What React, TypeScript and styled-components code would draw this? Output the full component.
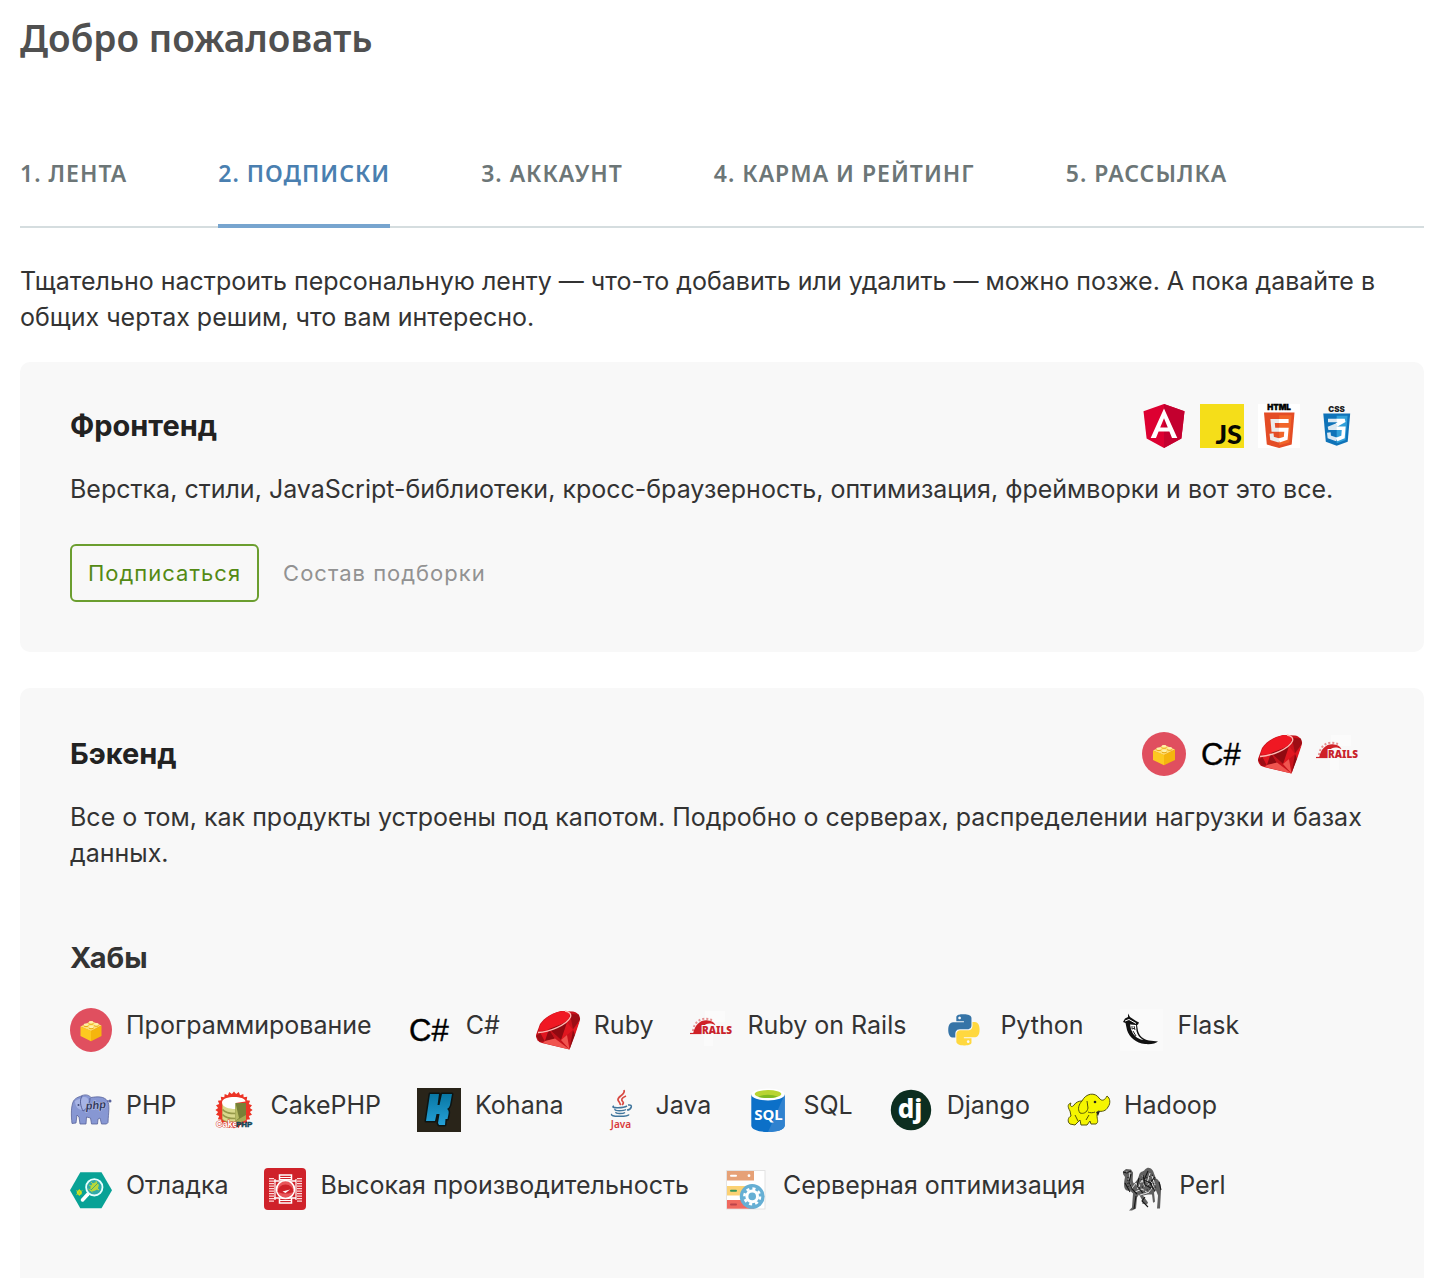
import React from 'react';
import styled, { createGlobalStyle } from 'styled-components';

const GlobalStyle = createGlobalStyle`
  *, *::before, *::after { box-sizing: border-box; }
  body {
    margin: 0;
    background: #fff;
    color: #333;
    font: 400 25px/36px Inter, "Liberation Sans", sans-serif;
  }
`;

const Page = styled.main`
  display: flex;
  flex-direction: column;
  min-height: 100vh;
  padding: 0 20px;
`;

const Title = styled.h1`
  margin: 0;
  padding-top: 10px;
  color: #505050;
  font: 600 37px/56px "Noto Sans", "Open Sans", sans-serif;
`;

const Tabs = styled.nav`
  display: flex;
  gap: 91px;
  margin-top: 74px;
  border-bottom: 2px solid #d5dddf;
`;

const Tab = styled.a<{ $active?: boolean }>`
  height: 88px;
  margin-bottom: -2px;
  padding-top: 15px;
  border-bottom: 4px solid ${(p) => (p.$active ? '#77a5cf' : 'transparent')};
  color: ${(p) => (p.$active ? '#4a7fb0' : '#6c7677')};
  font: 600 23px/36px "Noto Sans", "Open Sans", sans-serif;
  letter-spacing: 1px;
  text-decoration: none;
  text-transform: uppercase;
  white-space: nowrap;
`;

const Intro = styled.p`
  margin: 35px 0 27px;
`;

const Card = styled.section<{ $expanded?: boolean }>`
  flex: ${(p) => (p.$expanded ? '1 0 auto' : 'none')};
  padding: ${(p) => (p.$expanded ? 44 : 42)}px 50px 50px;
  border-radius: ${(p) => (p.$expanded ? '10px 10px 0 0' : '10px')};
  background: #f8f8f8;

  & + & { margin-top: 36px; }
`;

const CardHeader = styled.header`
  display: flex;
  align-items: center;
  justify-content: space-between;
  height: 44px;
`;

const CardTitle = styled.h2`
  margin: 0;
  color: #222;
  font-size: 29px;
  font-weight: 700;
  line-height: 36px;
`;

const Previews = styled.div`
  display: flex;
  gap: 14px;
  padding-right: 14px;
`;

const Description = styled.p`
  margin: 23px 0 0;
`;

const Actions = styled.div`
  display: flex;
  align-items: center;
  gap: 24px;
  margin-top: 37px;
`;

const SubscribeButton = styled.button`
  height: 58px;
  padding: 0 16px;
  border: 2px solid #6b9e2f;
  border-radius: 6px;
  background: transparent;
  color: #548a15;
  font: 400 22px/36px Inter, "Liberation Sans", sans-serif;
  letter-spacing: 1px;
  cursor: pointer;
`;

const TextButton = styled.button`
  padding: 0;
  border: 0;
  background: transparent;
  color: #929292;
  font: 400 22px/36px Inter, "Liberation Sans", sans-serif;
  letter-spacing: 1px;
  cursor: pointer;
`;

const HubsTitle = styled.h3`
  margin: 69px 0 32px;
  font-size: 29px;
  font-weight: 700;
  line-height: 36px;
`;

const HubList = styled.ul`
  display: flex;
  flex-wrap: wrap;
  gap: 36px;
  margin: 0;
  padding: 0;
  list-style: none;
`;

const HubLink = styled.a`
  display: flex;
  align-items: flex-start;
  gap: 14px;
  height: 44px;
  color: inherit;
  line-height: 34px;
  text-decoration: none;
  white-space: nowrap;
`;

const Picture = styled.svg<{ $width: number }>`
  display: block;
  flex: none;
  width: ${(p) => p.$width}px;
  height: 44px;
  overflow: visible;
`;

const seal = Array.from({ length: 48 }, (_, i) => {
  const r = i % 2 ? 16 : 18.6;
  const a = (i * Math.PI) / 24;
  return `${(21 + r * Math.cos(a)).toFixed(1)},${(22 + r * Math.sin(a)).toFixed(1)}`;
}).join(' ');

const drawings: Record<string, React.ReactNode> = {
  angular: (
    <>
      <path fill="#dd0031" d="M22 0 42.5 7.3 39.4 34.4 22 44 4.6 34.4 1.5 7.3z" />
      <path fill="#c3002f" d="M22 0 42.5 7.3 39.4 34.4 22 44z" />
      <path fill="#fff" fillRule="evenodd" d="M22 4.5 8.7 34H14l2.600-6.500h10.800L30 34h5.300zm0 9.700 3.800 9.300h-7.600z" />
    </>
  ),
  js: (
    <>
      <rect width="44" height="44" fill="#f5de19" />
      <text x="42" y="40" textAnchor="end" fontFamily="Lato, sans-serif" fontWeight="900" fontSize="27" fill="#080800">JS</text>
    </>
  ),
  html: (
    <>
      <rect width="42" height="44" fill="#fff" />
      <text x="21" y="6" textAnchor="middle" fontFamily="Inter, sans-serif" fontWeight="900" fontSize="8" fill="#000" stroke="#000" strokeWidth=".4">HTML</text>
      <path fill="#e44d26" d="M6 8.500h30.500L33.700 40.500 21.200 44 8.800 40.500z" />
      <path fill="#f16529" d="M21.200 11.200h12.400l-2.300 27.200-10.100 2.900z" />
      <path fill="none" stroke="#ebebeb" strokeWidth="4" d="M21.200 17H14.600l.8 8.700h5.800M13.500 29.500l.6 5 7.100 2" />
      <path fill="none" stroke="#fff" strokeWidth="4" d="M21 17h9.600M21 25.700h7.500l-.8 8.600-6.700 2.200" />
    </>
  ),
  css: (
    <>
      <text x="20.500" y="8" textAnchor="middle" fontFamily="Inter, sans-serif" fontWeight="900" fontSize="8" fill="#222">CSS</text>
      <path fill="#0f73b8" d="M7.300 9.500h26.900l-2.500 28.300-11 3.900-10.900-3.900z" />
      <path fill="#31a0d9" d="M20.700 11.800h10.900l-2.100 24.300-8.800 3.100z" />
      <path fill="none" stroke="#dce9f2" strokeWidth="3.600" d="M12 16.500h9M21 20.800l-8.600 3.500h8.600M12.800 28.500l.5 4.500 7.500 2.500" />
      <path fill="none" stroke="#fff" strokeWidth="3.600" d="M20.700 16.500h8l-8 4.300M20.700 24.300h7l-.7 8.700-6.300 2.500" />
    </>
  ),
  brick: (
    <>
      <circle cx="22" cy="22" r="22" fill="#e04f5f" />
      <path fill="#fddf78" d="M11 18.400 22.300 13 33 17.600 22 23.300z" />
      <path fill="#fdc920" d="M11 18.400 22 22.800v10.400L11 28z" />
      <path fill="#f5b50e" d="M22 22.800 33 17.600V28L22 33.200z" />
      <g fill="#e8a80d">
        <ellipse cx="16.800" cy="17.600" rx="2.600" ry="1.500" />
        <ellipse cx="22.300" cy="19.700" rx="2.600" ry="1.500" />
        <ellipse cx="22" cy="15.200" rx="2.600" ry="1.500" />
        <ellipse cx="27.600" cy="17.200" rx="2.600" ry="1.500" />
      </g>
      <g fill="#fff0a8">
        <ellipse cx="16.800" cy="16.800" rx="2.500" ry="1.300" />
        <ellipse cx="22.300" cy="18.900" rx="2.500" ry="1.300" />
        <ellipse cx="22" cy="14.400" rx="2.500" ry="1.300" />
        <ellipse cx="27.600" cy="16.400" rx="2.500" ry="1.300" />
      </g>
    </>
  ),
  csharp: (
    <text x="1" y="33" fontFamily="Liberation Sans, sans-serif" fontSize="31" fill="#000" stroke="#000" strokeWidth=".4">C#</text>
  ),
  ruby: (
    <>
      <path fill="#c8121b" d="M0 27 4 16C9 9 16 5 25 3l12 .5c4 .5 6 3 7 7L33.500 41.500 6 35C2 34 0 31 0 27z" />
      <path fill="#f01823" d="M3 22C3 15 13 6 24 3.500c10-1.500 12 4 7 8.500C24 19 5 25 3 22z" />
      <path fill="#9d0d14" d="M34 6 43 6.500 44 12 37 21zM0 28 4.500 25 8.500 33 4 34z" />
      <path fill="#e0161f" d="M31 14 37 22 25 32zM4.500 25 13 21 9 33zM37 22 44 12 39 27z" />
      <path fill="#8f0a11" d="M13 21 31 14 25 32zM37 22 39 27 33.500 41.500zM13 21 19 31 9 33z" />
      <path fill="#c3131b" d="M13 21 25 32 19 31z" />
      <path fill="#f0544f" d="M9 33 19 30.500 33.500 41.500 7 35zM25 32 31 27 33.500 41.500z" />
      <path fill="none" stroke="#ffb9b2" strokeWidth="1.300" d="M2 24.500C13 24 31 17 34.500 9c1-3-1-5-5.500-6" />
    </>
  ),
  rails: (
    <>
      <path fill="#fbfbfb" d="M15 3h20v11H15zM14 27h9v11h-9z" />
      <path fill="none" stroke="#e58f90" strokeWidth="2" strokeDasharray="2 2" d="M3 23C4 14 11 8 22 12" />
      <path fill="#cf2127" d="M3 26C5 16 11 11.500 18 12.500c5 .5 7 3 7.500 5-4-3-10-2.500-12 1-1.500 2.500-1.500 5-1 7.500z" />
      <path fill="none" stroke="#cf2127" strokeWidth="1.200" d="M0 25.500h12" />
      <text x="12" y="26" fontFamily="Noto Sans, sans-serif" fontWeight="900" fontSize="10" fill="#c9232b" stroke="#f8f8f8" strokeWidth="2" paintOrder="stroke">RAILS</text>
    </>
  ),
  python: (
    <g transform="translate(6.300 6.200) scale(1.300)">
      <path fill="#3674a7" d="M14.250.18l.9.2.73.26.59.3.45.32.34.34.25.34.16.33.1.3.04.26.02.2-.01.13V8.500l-.05.63-.13.55-.21.46-.26.38-.3.31-.33.25-.35.19-.35.14-.33.1-.3.07-.26.04-.21.02H8.770l-.69.05-.59.14-.5.22-.41.27-.33.32-.27.35-.2.36-.15.37-.1.35-.07.32-.04.27-.02.21v3.060H3.170l-.21-.03-.28-.07-.32-.12-.35-.18-.36-.26-.36-.36-.35-.46-.32-.59-.28-.73-.21-.88-.14-1.050-.05-1.230.06-1.220.16-1.040.24-.87.32-.71.36-.57.4-.44.42-.33.42-.24.4-.16.36-.1.32-.05.24-.01h.16l.06.01h8.160v-.83H6.180l-.01-2.750-.02-.37.05-.34.11-.31.17-.28.25-.26.31-.23.38-.2.44-.18.51-.15.58-.12.64-.1.71-.06.77-.04.84-.02 1.270.05zm-6.300 1.980l-.23.33-.08.41.08.41.23.34.33.22.41.09.41-.09.33-.22.23-.34.08-.41-.08-.41-.23-.33-.33-.22-.41-.09-.41.09z" />
      <path fill="#ffd83f" d="M21.040 6.110l.28.06.32.12.35.18.36.27.36.35.35.47.32.59.28.73.21.88.14 1.040.05 1.230-.06 1.230-.16 1.040-.24.86-.32.71-.36.57-.4.45-.42.33-.42.24-.4.16-.36.09-.32.05-.24.02-.16-.01h-8.220v.82h5.840l.01 2.760.02.36-.05.34-.11.31-.17.29-.25.25-.31.24-.38.2-.44.17-.51.15-.58.13-.64.09-.71.07-.77.04-.84.01-1.270-.04-1.070-.14-.9-.2-.73-.25-.59-.3-.45-.33-.34-.34-.25-.34-.16-.33-.1-.3-.04-.25-.02-.2.01-.13v-5.340l.05-.64.13-.54.21-.46.26-.38.3-.32.33-.24.35-.2.35-.14.33-.1.3-.06.26-.04.21-.02.13-.01h5.840l.69-.05.59-.14.5-.21.41-.28.33-.32.27-.35.2-.36.15-.36.1-.35.07-.32.04-.28.02-.21V6.070h2.090l.14.01zm-6.470 14.250l-.23.33-.08.41.08.41.23.33.33.23.41.08.41-.08.33-.23.23-.33.08-.41-.08-.41-.23-.33-.33-.23-.41-.08-.41.08z" />
    </g>
  ),
  flask: (
    <>
      <rect width="43" height="42" y="1" fill="#fafafa" />
      <path fill="#111" d="M8 5.500 10 9l6 4 3 1.500-1 2-1 .5 1 6c1.500 5 5 8.500 11 9.500l9 1c-2 2-7 3-13 2.500-9-1-16-7-18-14L5.500 15 3 14l2-3.500 3-1.500z" />
      <path fill="#fff" d="M10 16.500l6 .5.500 6c1 4 3 7 7 9-7-1-11-6-12.500-11z" />
      <path fill="none" stroke="#fff" strokeWidth="1" d="M5 13l4-1.500 7 4" />
      <path fill="none" stroke="#222" strokeWidth="1" d="M12 18v3l3-1M13 23l3 5M14 18l1 4" />
    </>
  ),
  php: (
    <>
      <path fill="#8797d3" stroke="#59639b" strokeWidth=".8" d="M2 35.500C1 27 1 18 3.500 13 6 9 10 9 12 7.500c5-1.500 7 0 9 2 6-1 13-1.500 16.500 3.500 2.500 4 1 11 .5 21.500l-1.500 1.500h-5L30 30l-2 1-.5 5h-6l-1-6-4-1-.5 7h-6L9 29l-2-2-1 8z" />
      <path fill="#a7b4e5" d="M5 13c3-2 6-2 8-4 4-.5 5 1 5.500 4-1 5-3 9-6 9C8 22 5 18 5 13z" />
      <path fill="none" stroke="#59639b" strokeWidth="1" d="M12 8c-3 5-1 11 1 15 4-2 7-7 7-13M37 13h4" />
      <circle cx="40" cy="13" r="1.500" fill="#59639b" />
      <circle cx="8.500" cy="17" r="1" fill="#414978" />
      <text x="16" y="21" transform="rotate(-5 25 20)" fontFamily="Liberation Sans, sans-serif" fontWeight="700" fontStyle="italic" fontSize="11" fill="#343b60" stroke="#c2cbed" strokeWidth="1" paintOrder="stroke">php</text>
    </>
  ),
  cake: (
    <>
      <polygon fill="#ec3426" points={seal} />
      <path fill="#a7aa54" d="M9.500 15h23.500v17c-5 4-19 4-23.500 0z" />
      <path fill="#d9d98c" d="M9.500 16c3 4 8 4 13 4v13.500c-5 .5-10 0-13-2.500z" />
      <path fill="none" stroke="#96994a" strokeWidth="1.500" d="M9.500 21.500c3 4 8 4 13 4M9.500 26.500c3 4 8 4 13 4" />
      <path fill="#fff" d="M9 14.500c0-7 23-7 23.500-1L22.500 15v6C16 21 9 19 9 14.500z" />
      <path fill="#788037" d="M22.500 15 33 15v12l-10.500 6z" />
      <path fill="#b7bb64" d="M22.500 15 26 30l-3.500 3z" />
      <text x="3" y="39" fontFamily="Liberation Sans, sans-serif" fontWeight="700" fontSize="9" fill="#fff" stroke="#d94b3d" strokeWidth="1" paintOrder="stroke">Cake</text>
      <text x="23" y="39" fontFamily="Liberation Sans, sans-serif" fontWeight="700" fontSize="8" fill="#12495b" stroke="#12495b" strokeWidth=".5">PHP</text>
    </>
  ),
  kohana: (
    <>
      <defs>
        <linearGradient id="kohana-blue" x1="0" y1="0" x2="0" y2="1">
          <stop stopColor="#0877a4" />
          <stop offset="1" stopColor="#25a0d6" />
        </linearGradient>
      </defs>
      <rect width="44" height="44" fill="#292419" />
      <path fill="url(#kohana-blue)" stroke="#0c1413" strokeWidth="3" strokeLinejoin="round" paintOrder="stroke" d="M13 6h9l-1.500 11h2L25 6h10l-2 11c-.5 2-1.500 3-3 4 1.500 1 2 2.500 1.500 5l-1 5h-2l-.5 6h-6l-1-2 1.500-9h-3L18 33H9z" />
    </>
  ),
  java: (
    <>
      <g fill="none" stroke="#d84a43" strokeWidth="1.700">
        <path d="M24 2c2 5-7 6-6 10 .5 2 3 3 2 5" />
        <path d="M26 8c-5 2-5 4-3 6 1 1 0 2-1 3" />
      </g>
      <g fill="none" stroke="#41769d" strokeWidth="1.500">
        <path d="M14 18c-5 2 9 2.500 13 0M28 17c6-1 3 5-1 5M15 21c-1 2.500 9 2 11 .5M16 24c-1 2 7 2 9 .5M12 26c-4 3 16 3 17 .500" />
      </g>
      <text x="21" y="40" textAnchor="middle" fontFamily="Noto Sans, sans-serif" fontWeight="600" fontSize="10" fill="#d8393b">Java</text>
    </>
  ),
  sql: (
    <>
      <path fill="#0c70c8" d="M4.300 6.500h33.400v31c0 8.700-33.400 8.700-33.400 0z" />
      <path fill="#3082cf" d="M37.700 6.500v31c0 4.500-8.700 6.500-16.700 6.500z" />
      <ellipse cx="21" cy="6.500" rx="16.700" ry="6" fill="#fff" />
      <ellipse cx="21" cy="6" rx="13.300" ry="4" fill="#b8d432" />
      <path fill="#7fba22" d="M11 8.700c6-2.700 14-2.700 20 0-5 1.800-15 1.800-20 0z" />
      <text x="21.500" y="32" textAnchor="middle" fontFamily="Noto Sans, sans-serif" fontWeight="700" fontSize="15" fill="#fff">SQL</text>
    </>
  ),
  django: (
    <>
      <circle cx="22" cy="22" r="20.200" fill="#0c2e20" />
      <text x="21" y="30" textAnchor="middle" fontFamily="Noto Sans, sans-serif" fontWeight="800" fontSize="26" fill="#fff">dj</text>
    </>
  ),
  hadoop: (
    <>
      <g fill="#f5f500" stroke="#55550c" strokeWidth="1" strokeLinejoin="round">
        <path d="M4 23c-3-5-2-7 1-8-2 3 1 5 3 2 2-3 5-4 8-4 4-8 13-9 17-3 3 4 6 2 8-2 3 2 4 7 1 11-2 4-6 5-10 4l-1 4c0 5 2 7-1 9h-5l-1-3-3 4h-6l-1-5-5 5-5-1c-3-2-2-7 1-8z" />
        <path d="M16 13c-3 3-5 8-2 12 3 1 7 0 8-5l-1-7" />
      </g>
      <path fill="none" stroke="#55550c" strokeWidth="1" d="M22 24c2 1 5 1 7 0M9 27l3 6M20 32l3-5" />
      <circle cx="29" cy="14" r="1.300" fill="#222" />
      <path fill="#222" d="M30 24l4-1-2 5z" />
    </>
  ),
  debug: (
    <>
      <path fill="#08a296" d="M0 22.300 10.300 4.300h21.200L42 22.300 31.500 40.300H10.300z" />
      <path stroke="#fff" strokeWidth="3.500" strokeLinecap="round" d="M12.500 32 18 26" />
      <circle cx="24.300" cy="19.300" r="8.200" fill="#30aaa7" stroke="#e7ffff" strokeWidth="1.800" />
      <ellipse cx="24.500" cy="18.800" rx="3.500" ry="5" transform="rotate(40 24.500 18.800)" fill="#b9d839" />
      <path stroke="#b9d839" strokeWidth="1" d="M19 17l10 5M21 14l8 8M26 13l2 5M18.500 21l4 3" />
      <path stroke="#12988a" strokeWidth=".7" d="M21 22l7-7" />
      <circle cx="9.300" cy="24.600" r="2.500" fill="#d9e51c" />
      <path stroke="#a9cf2f" strokeWidth="1" strokeDasharray="1 1" d="M6 22.500l7 4M6 27l7-5M9.300 21v7" />
    </>
  ),
  performance: (
    <>
      <rect width="42" height="42" rx="4" fill="#cf222a" />
      <path fill="none" stroke="#fff" strokeWidth="1.500" d="M15.500 12V7h12v5M15.500 30v5h12v-5M10 13h22M10 30h22" />
      <path stroke="#fff" strokeWidth="1" d="M16 9.500h11M16 11.500h11M16 28h11M16 32.500h11" />
      <path stroke="#ffd8d8" strokeWidth="5" strokeDasharray="1.300 1.200" d="M7.500 10v24M35.500 10v24" />
      <path fill="none" stroke="#fff" strokeWidth="1.200" d="M11 11v21M32 11v21" />
      <circle cx="21.500" cy="21.500" r="9" fill="#e8565a" stroke="#fff" strokeWidth="1.600" />
      <path fill="#cf222a" d="M13.500 24a8 7.500 0 0 1 16 0l-5 1.500h-6z" />
      <path fill="#fff" d="M18.500 23.500l7.500-2-4.500 3.500z" />
    </>
  ),
  server: (
    <>
      <rect x="1.600" y="2.600" width="38.400" height="38.400" fill="#fff" stroke="#ddd" strokeWidth=".8" />
      <path fill="#e6a177" d="M2 3h27v9.500H2z" />
      <path fill="#fbd174" d="M2 18h27v9.500H2z" />
      <path fill="#f0695f" d="M2 32h27v8.700H2z" />
      <path stroke="#fff" strokeWidth="2" strokeLinecap="round" d="M6 7.700h5" />
      <circle cx="24" cy="7.700" r="1.400" fill="#fff" />
      <path stroke="#35965b" strokeWidth="2" strokeLinecap="round" d="M6 22.700h5" />
      <path stroke="#bb444b" strokeWidth="2" strokeLinecap="round" d="M6 36.500h5" />
      <circle cx="27.200" cy="28.400" r="12.400" fill="#66afd4" />
      <circle cx="27.200" cy="28.400" r="5.300" fill="none" stroke="#fff" strokeWidth="3" />
      <circle cx="27.200" cy="28.400" r="7.800" fill="none" stroke="#fff" strokeWidth="2.600" strokeDasharray="3.060 3.060" />
    </>
  ),
  camel: (
    <>
      <path fill="#606060" d="M2 3.500 5 1l5 .5 2 3c0 5-1 9 1 11 2-2 4-4 5-8 1-5 4-3 6-6 4-4 8 0 9 4l2 5c4 2 5 6 5 12l-1 18h-3l1-13-2-5-2 2 1 9-1 1h-1l-1-8-4 0-5 1 5 7-1 2-5-1 1-2-4-7-2 3-1 11-4 2h-3l3-3 1-14-3-3C3 24 2 18 4 9L2 6z" />
      <g fill="none" stroke="#eee" strokeWidth=".9">
        <path d="M5 4l4 1-1 8 3 8M11 20l4-5 2 6 4-9 3 7M21 7l5 8 3-10M26 18l4-5 4 10M14 24l7-3 6 4 4-5M19 27l7-2M31 8l3 9" />
      </g>
      <g fill="none" stroke="#181818" strokeWidth="1.100">
        <path d="M2 4l4 1 4-2M10 6l-2 8 3 7 5 5M4 15l5 9M18 10l-2 8 6 7M22 7l2 10 6 3M27 3l-4 9 8 4M34 9l-5 6 5 8M15 28l-2 13M24 29l-3 4 6 6M38 14l2 8" />
        <path strokeDasharray="1 2" d="M17 13l15-6M19 16l16-5M18 20l17-5M20 24l15-5M7 9v12" />
      </g>
    </>
  ),
};

function Icon({ name, width = 44 }: { name: string; width?: number }) {
  return (
    <Picture $width={width} viewBox={`0 0 ${name === 'brick' ? 44 : width} 44`} preserveAspectRatio="none" aria-hidden="true">
      {drawings[name]}
    </Picture>
  );
}

const tabs = ['1. Лента', '2. Подписки', '3. Аккаунт', '4. Карма и рейтинг', '5. Рассылка'];

const hubs = [
  { icon: 'brick', label: 'Программирование', width: 42 },
  { icon: 'csharp', label: 'C#' },
  { icon: 'ruby', label: 'Ruby' },
  { icon: 'rails', label: 'Ruby on Rails' },
  { icon: 'python', label: 'Python' },
  { icon: 'flask', label: 'Flask' },
  { icon: 'php', label: 'PHP', width: 42 },
  { icon: 'cake', label: 'CakePHP' },
  { icon: 'kohana', label: 'Kohana' },
  { icon: 'java', label: 'Java', width: 42 },
  { icon: 'sql', label: 'SQL', width: 42 },
  { icon: 'django', label: 'Django' },
  { icon: 'hadoop', label: 'Hadoop' },
  { icon: 'debug', label: 'Отладка', width: 42 },
  { icon: 'performance', label: 'Высокая производительность', width: 42 },
  { icon: 'server', label: 'Серверная оптимизация' },
  { icon: 'camel', label: 'Perl' },
];

function CardHead({ title, icons }: { title: string; icons: string[] }) {
  return (
    <CardHeader>
      <CardTitle>{title}</CardTitle>
      <Previews>
        {icons.map((name) => <Icon key={name} name={name} />)}
      </Previews>
    </CardHeader>
  );
}

export default function App() {
  return (
    <>
      <GlobalStyle />
      <Page>
        <Title>Добро пожаловать</Title>
        <Tabs>
          {tabs.map((label, i) => (
            <Tab key={label} href="#" $active={i === 1} aria-current={i === 1 ? 'step' : undefined}>{label}</Tab>
          ))}
        </Tabs>
        <Intro>
          Тщательно настроить персональную ленту — что-то добавить или удалить — можно позже. А пока давайте в общих чертах решим, что вам интересно.
        </Intro>
        <Card>
          <CardHead title="Фронтенд" icons={['angular', 'js', 'html', 'css']} />
          <Description>
            Верстка, стили, JavaScript-библиотеки, кросс-браузерность, оптимизация, фреймворки и вот это все.
          </Description>
          <Actions>
            <SubscribeButton type="button">Подписаться</SubscribeButton>
            <TextButton type="button">Состав подборки</TextButton>
          </Actions>
        </Card>
        <Card $expanded>
          <CardHead title="Бэкенд" icons={['brick', 'csharp', 'ruby', 'rails']} />
          <Description>
            Все о том, как продукты устроены под капотом. Подробно о серверах, распределении нагрузки и базах данных.
          </Description>
          <HubsTitle>Хабы</HubsTitle>
          <HubList>
            {hubs.map((hub) => (
              <li key={hub.label}>
                <HubLink href="#">
                  <Icon name={hub.icon} width={hub.width} />
                  {hub.label}
                </HubLink>
              </li>
            ))}
          </HubList>
        </Card>
      </Page>
    </>
  );
}
